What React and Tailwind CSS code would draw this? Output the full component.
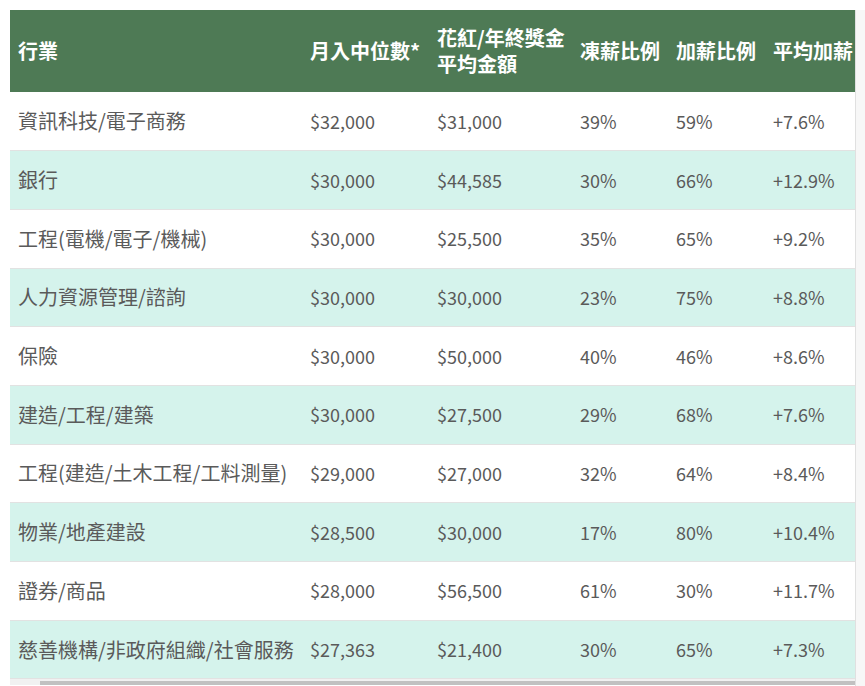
import React from 'react';

const rows = [
  ['資訊科技/電子商務', '$32,000', '$31,000', '39%', '59%', '+7.6%'],
  ['銀行', '$30,000', '$44,585', '30%', '66%', '+12.9%'],
  ['工程(電機/電子/機械)', '$30,000', '$25,500', '35%', '65%', '+9.2%'],
  ['人力資源管理/諮詢', '$30,000', '$30,000', '23%', '75%', '+8.8%'],
  ['保險', '$30,000', '$50,000', '40%', '46%', '+8.6%'],
  ['建造/工程/建築', '$30,000', '$27,500', '29%', '68%', '+7.6%'],
  ['工程(建造/土木工程/工料測量)', '$29,000', '$27,000', '32%', '64%', '+8.4%'],
  ['物業/地產建設', '$28,500', '$30,000', '17%', '80%', '+10.4%'],
  ['證券/商品', '$28,000', '$56,500', '61%', '30%', '+11.7%'],
  ['慈善機構/非政府組織/社會服務', '$27,363', '$21,400', '30%', '65%', '+7.3%'],
];

const font = { fontFamily: '"Noto Sans CJK TC", "Noto Sans", sans-serif' };

export default function App() {
  return (
    <div className="flex bg-white pt-[10px] pl-[10px] h-[686px] overflow-hidden" style={font}>
      {/* Tabelle + horizontale Scrollleiste */}
      <div className="w-[845px] flex flex-col">
        <div className="overflow-hidden">
          <table className="table-fixed border-collapse w-[875px] text-[20px]">
            <colgroup>
              <col className="w-[292px]" />
              <col className="w-[127px]" />
              <col className="w-[143px]" />
              <col className="w-[96px]" />
              <col className="w-[97px]" />
              <col className="w-[120px]" />
            </colgroup>
            <thead>
              <tr className="bg-[#4e7a55] text-white h-[82px]">
                <th className="text-left font-bold px-2 leading-[26px]">行業</th>
                <th className="text-left font-bold px-2 leading-[26px] whitespace-nowrap">月入中位數*</th>
                <th className="text-left font-bold px-2 leading-[26px] whitespace-nowrap">花紅/年終獎金<br />平均金額</th>
                <th className="text-left font-bold px-2 leading-[26px] whitespace-nowrap">凍薪比例</th>
                <th className="text-left font-bold px-2 leading-[26px] whitespace-nowrap">加薪比例</th>
                <th className="text-left font-bold px-2 leading-[26px] whitespace-nowrap">平均加薪</th>
              </tr>
            </thead>
            <tbody className="text-[#5a5a5a]">
              {rows.map((r, i) => (
                <tr
                  key={i}
                  className={`h-[58.7px] border-b border-[#e2e2e2] ${i % 2 === 1 ? 'bg-[#d5f3ec]' : 'bg-white'}`}
                >
                  {r.map((c, j) => (
                    <td key={j} className={`px-2 whitespace-nowrap ${j > 0 ? 'text-[18px]' : ''}`}>{c}</td>
                  ))}
                </tr>
              ))}
            </tbody>
          </table>
        </div>
        <div className="h-[6px] bg-[#f1f1f1] pl-[30px] pt-[2px]">
          <div className="h-[4px] bg-[#c1c1c1]"></div>
        </div>
      </div>
      {/* rechter Rand */}
      <div className="w-[10px] bg-[#f7f7f7] border-l border-[#e0e0e0]"></div>
    </div>
  );
}
